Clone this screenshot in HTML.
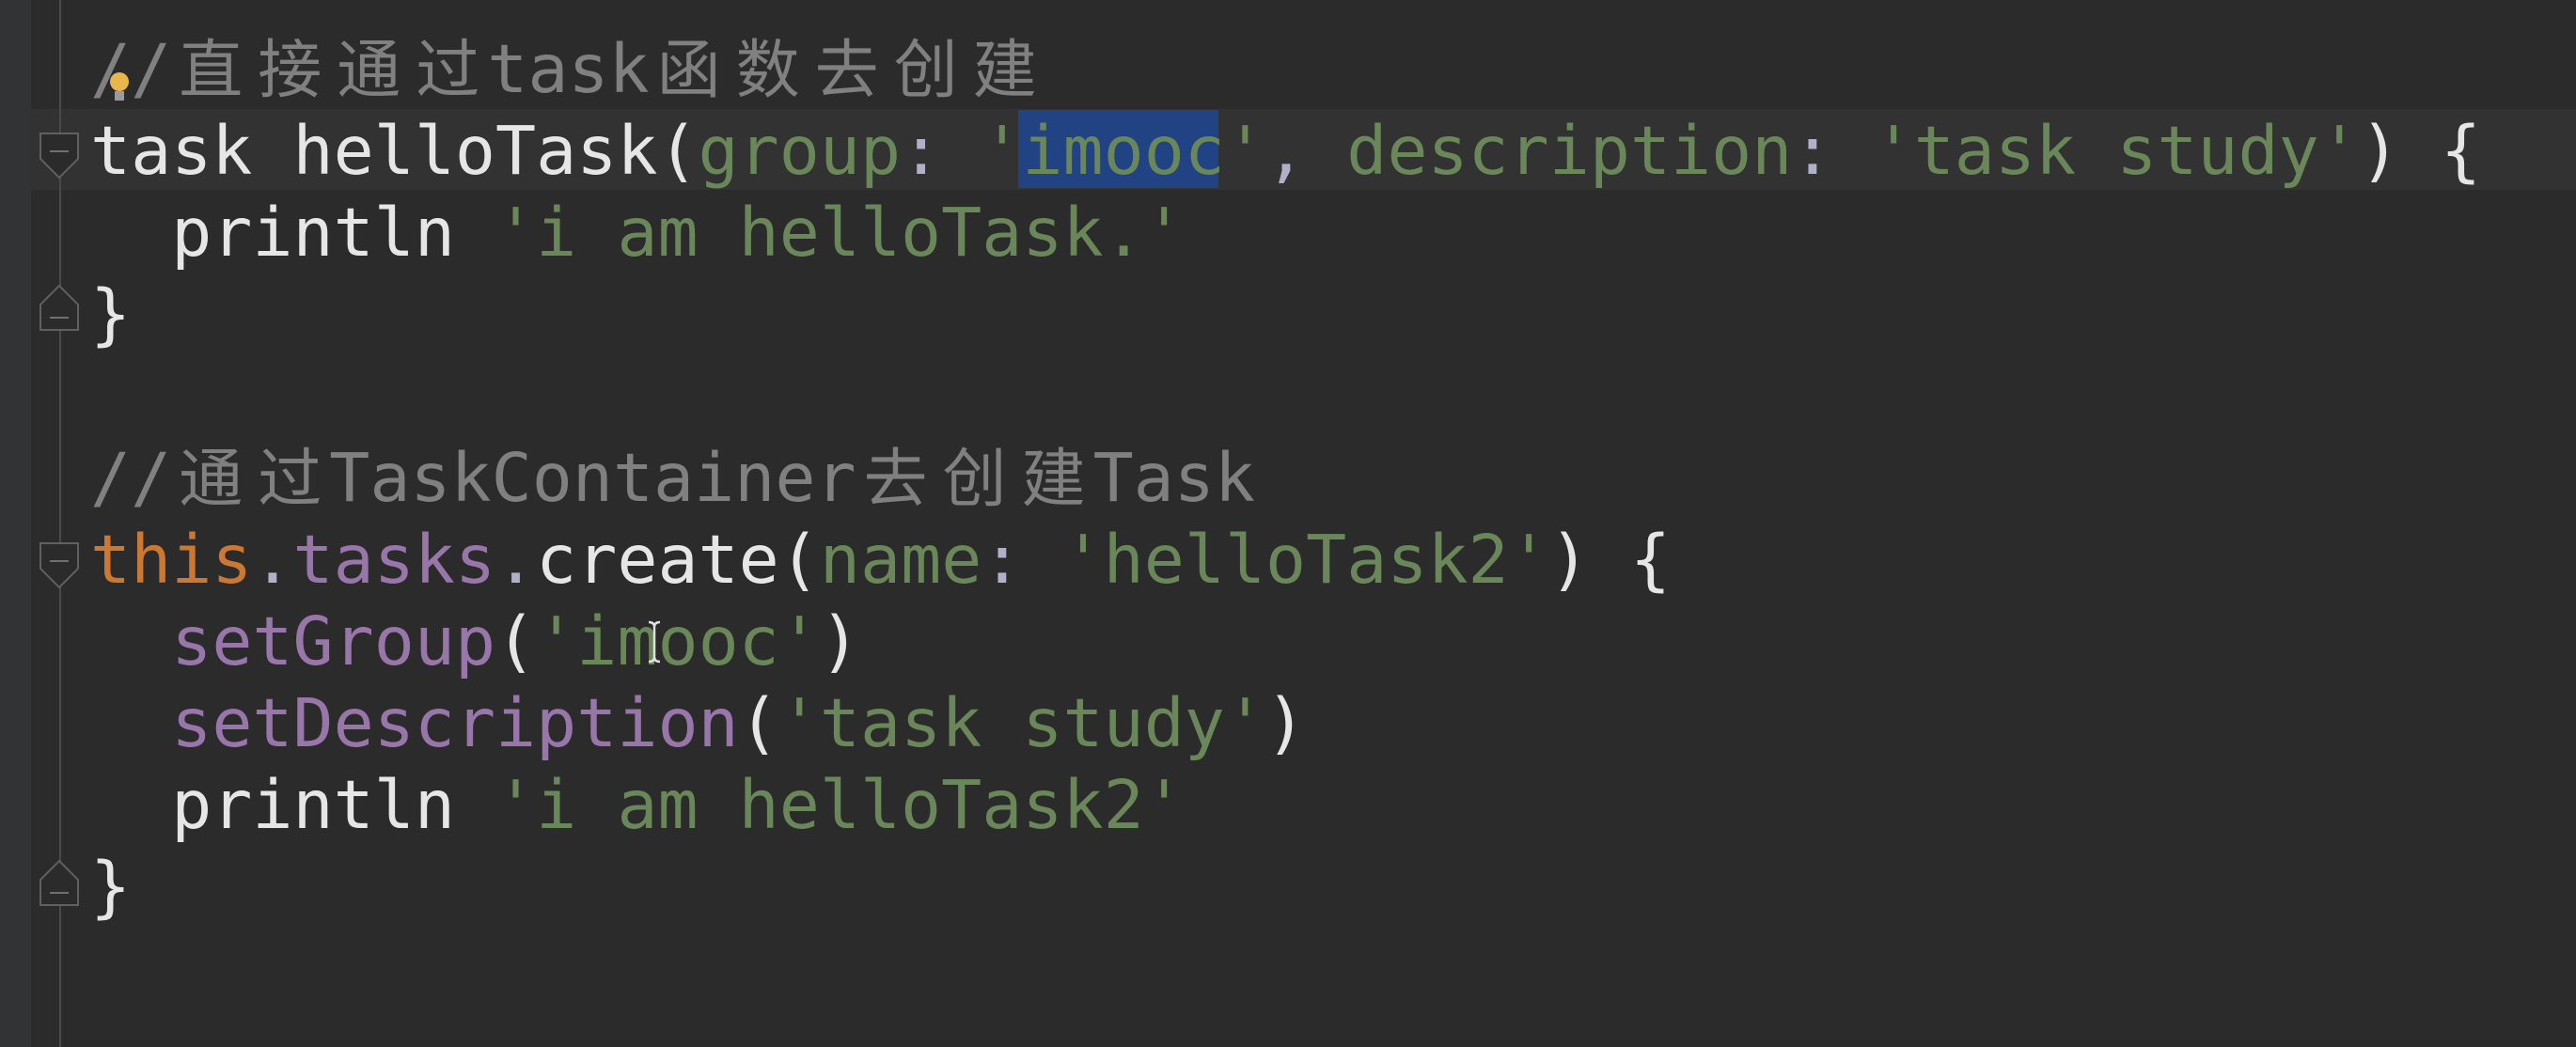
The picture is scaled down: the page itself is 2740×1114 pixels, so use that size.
<!DOCTYPE html>
<html><head><meta charset="utf-8"><style>
html,body{margin:0;padding:0;width:2740px;height:1114px;overflow:hidden;background:#2b2b2b;}
#gut{position:absolute;left:0;top:0;width:33px;height:1114px;background:#313335;}
#vl{position:absolute;left:63px;top:0;width:2px;height:1114px;background:#4a4a4a;}
#hl{position:absolute;left:33px;top:116px;width:2707px;height:86px;background:#323232;}
#sel{position:absolute;left:1083px;top:117px;width:213px;height:83px;background:#214283;}
#code{position:absolute;left:96px;top:30px;margin:0;font-family:"DejaVu Sans Mono","Liberation Mono","Noto Sans CJK SC",monospace;font-size:71.6px;line-height:87px;color:#e6e6e6;white-space:pre;}
.c{color:#808080}.s{color:#6a8759}.o{color:#cc7832}.p{color:#9876aa}.d{color:#b0b0c8}
.k{font-family:"Noto Sans CJK SC",sans-serif;display:inline-block;width:84px;text-align:center;line-height:60px;font-size:68px;}
.fold{position:absolute;}
</style></head><body>
<div id="gut"></div>
<div id="hl"></div>
<div id="sel"></div>
<div id="vl"></div>
<svg class="fold" style="top:139px;left:40px;width:46px;height:56px" viewBox="0 0 46 56"><path d="M3 3H43V30L23 50L3 30Z" fill="#2b2b2b" stroke="#606060" stroke-width="2"/><path d="M13 22H33" stroke="#707070" stroke-width="2"/></svg>
<svg class="fold" style="top:298px;left:40px;width:46px;height:56px" viewBox="0 0 46 56"><path d="M3 53H43V26L23 6L3 26Z" fill="#2b2b2b" stroke="#606060" stroke-width="2"/><path d="M13 40H33" stroke="#707070" stroke-width="2"/></svg>
<svg class="fold" style="top:575px;left:40px;width:46px;height:56px" viewBox="0 0 46 56"><path d="M3 3H43V30L23 50L3 30Z" fill="#2b2b2b" stroke="#606060" stroke-width="2"/><path d="M13 22H33" stroke="#707070" stroke-width="2"/></svg>
<svg class="fold" style="top:910px;left:40px;width:46px;height:56px" viewBox="0 0 46 56"><path d="M3 53H43V26L23 6L3 26Z" fill="#2b2b2b" stroke="#606060" stroke-width="2"/><path d="M13 40H33" stroke="#707070" stroke-width="2"/></svg>
<pre id="code"><span class="c">//<span class="k">直</span><span class="k">接</span><span class="k">通</span><span class="k">过</span>task<span class="k">函</span><span class="k">数</span><span class="k">去</span><span class="k">创</span><span class="k">建</span></span>
task helloTask(<span class="s">group</span><span class="d">:</span> <span class="s">'imooc'</span><span class="d">,</span> <span class="s">description</span><span class="d">:</span> <span class="s">'task study'</span>) {
  println <span class="s">'i am helloTask.'</span>
}

<span class="c">//<span class="k">通</span><span class="k">过</span>TaskContainer<span class="k">去</span><span class="k">创</span><span class="k">建</span>Task</span>
<span class="o">this</span><span class="d">.</span><span class="p">tasks</span><span class="d">.</span>create(<span class="s">name</span><span class="d">:</span> <span class="s">'helloTask2'</span>) {
  <span class="p">setGroup</span>(<span class="s">'imooc'</span>)
  <span class="p">setDescription</span>(<span class="s">'task study'</span>)
  println <span class="s">'i am helloTask2'</span>
}</pre>
<svg style="position:absolute;left:114px;top:75px" width="26" height="40" viewBox="0 0 26 40"><circle cx="13" cy="12" r="10" fill="#e8b64a"/><rect x="8" y="22" width="10" height="10" fill="#9a9a9a"/></svg>
<svg style="position:absolute;left:686px;top:659px" width="20" height="48" viewBox="0 0 20 48"><path d="M4 3Q10 3 10 8V40Q10 45 4 45M16 3Q10 3 10 8M16 45Q10 45 10 40" stroke="#e0e0e0" stroke-width="2.5" fill="none"/></svg>
</body></html>
